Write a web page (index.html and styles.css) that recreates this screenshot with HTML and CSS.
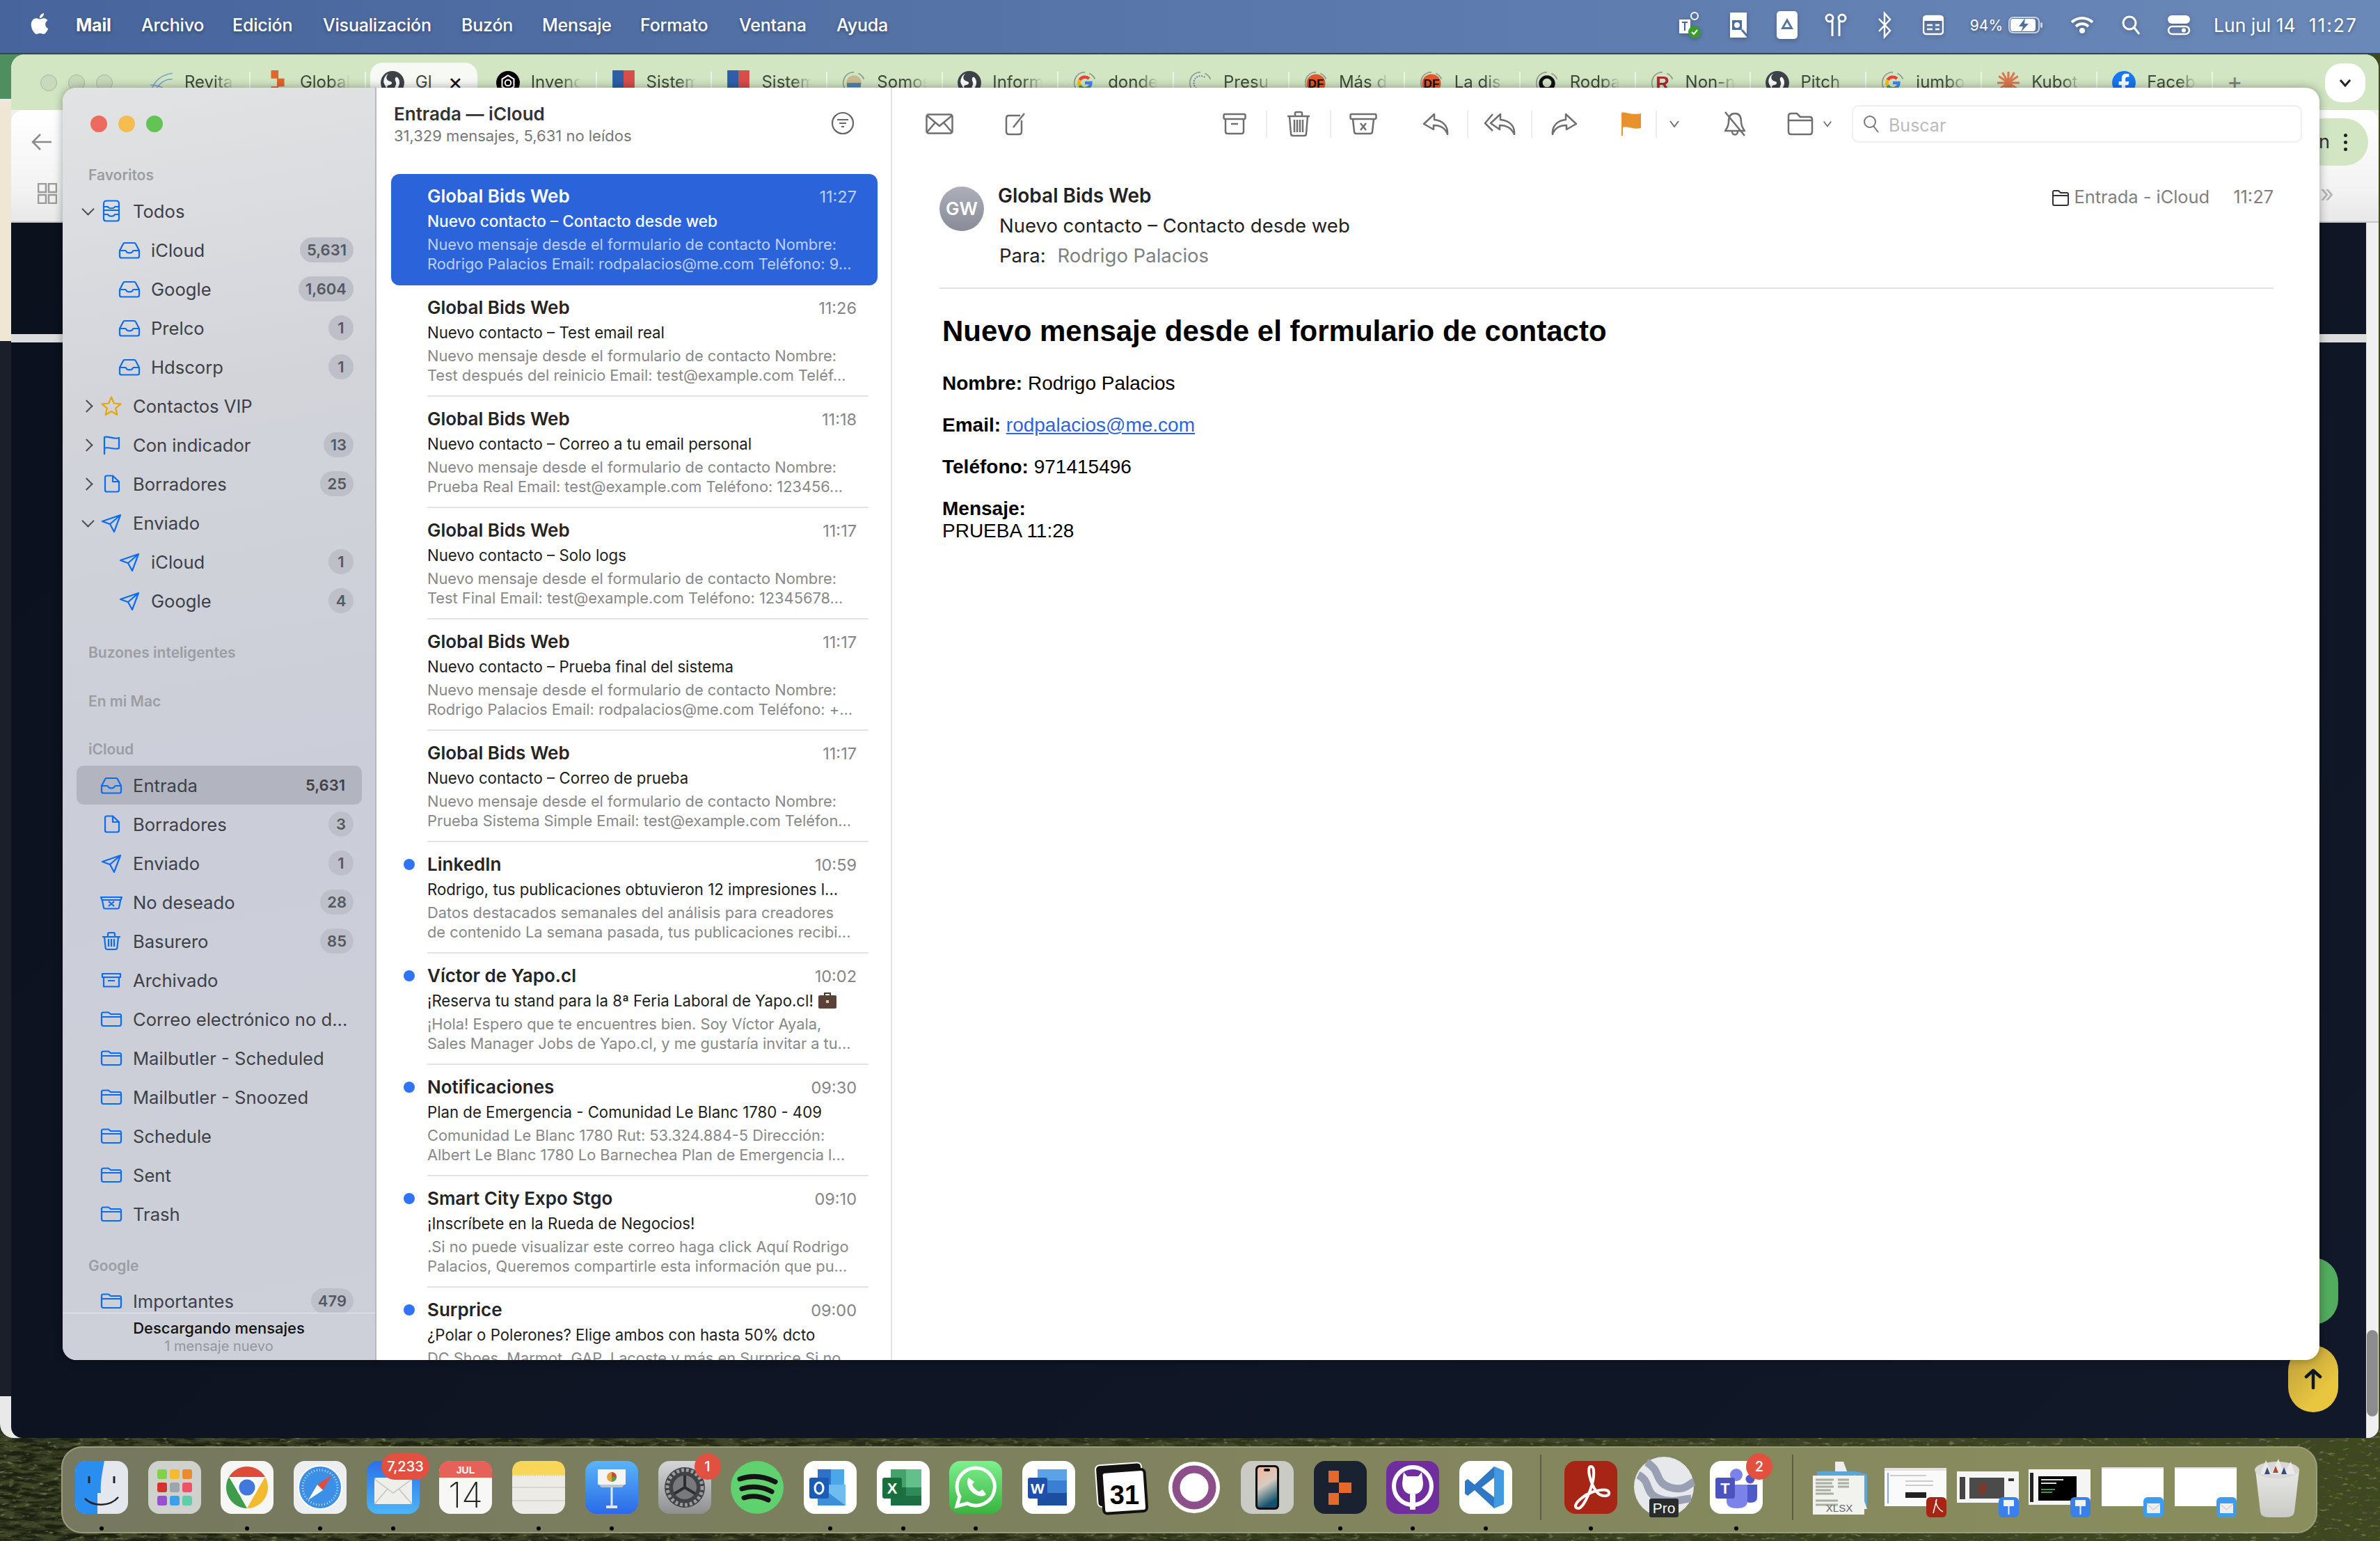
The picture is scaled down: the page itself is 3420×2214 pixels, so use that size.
FILE: index.html
```html
<!DOCTYPE html>
<html lang="es">
<head>
    <meta charset="UTF-8">
    <meta name="viewport" content="width=device-width, initial-scale=1.0">
    <title>Mail - Entrada</title>
    <link rel="stylesheet" href="styles.css">
</head>
<body>
    <!-- icon sprite -->
    <svg class="sprite" width="0" height="0">
        <defs>
            <symbol id="i-inbox" viewBox="0 0 32 32"><path d="M2 17 7 7.500Q7.600 6 9 6H23Q24.400 6 25 7.500L30 17V25Q30 27.500 27.500 27.500H4.500Q2 27.500 2 25ZM2 17H10Q11 17 11.400 18.200C12.500 21.200 19.500 21.200 20.600 18.200Q21 17 22 17H30"/></symbol>
            <symbol id="i-all" viewBox="0 0 32 32"><path d="M5 15V6Q5 1.500 9 1.500H23Q27 1.500 27 6V15M5 10H11C12 13 20 13 21 10H27M5 15V27Q5 30.500 8 30.500H24Q27 30.500 27 27V15M5 15H27M5 21H11C12 24.500 20 24.500 21 21H27"/></symbol>
            <symbol id="i-doc" viewBox="0 0 32 32"><path d="M7 7Q7 4.500 9.500 4.500H18L27 13V25Q27 27.500 24.500 27.500H9.500Q7 27.500 7 25ZM18 4.500V13H27"/></symbol>
            <symbol id="i-send" viewBox="0 0 32 32"><path d="M3 14 29 5 20 29 14 18ZM14 18 29 5"/></symbol>
            <symbol id="i-star" viewBox="0 0 32 32"><path d="M16 3.500 19.800 12.500 29.500 13.300 22.100 19.600 24.400 29 16 24 7.600 29 9.900 19.600 2.500 13.300 12.200 12.500Z"/></symbol>
            <symbol id="i-flag" viewBox="0 0 32 32"><path d="M6 30V5C12 3 20 9 27 6V21C20 24 12 18 6 21"/></symbol>
            <symbol id="i-junk" viewBox="0 0 32 32"><path d="M1 9H31L29 14 27 24Q26.700 25.500 25 25.500H7Q5.300 25.500 5 24L3 14ZM3 13H29M12 15 20 22M20 15 12 22"/></symbol>
            <symbol id="i-trash" viewBox="0 0 32 32"><path d="M3 10H29M11 10V6Q11 4 13 4H19Q21 4 21 6V10M6 10 7.500 25Q7.700 28 10 28H22Q24.300 28 24.500 25L26 10M12 13V24M16 13V24M20 13V24"/></symbol>
            <symbol id="i-archive" viewBox="0 0 32 32"><path d="M3 7H29V12H3ZM5 12V25.500H27V12M11 17H21"/></symbol>
            <symbol id="i-folder" viewBox="0 0 32 32"><path d="M2 9Q2 6.500 4.500 6.500H12L15 9H28Q30 9 30 11.500V23Q30 26 27.500 26H4.500Q2 26 2 23ZM2 13H30"/></symbol>
            <symbol id="t-ring" viewBox="0 0 40 40"><path class="ring" d="M8 32A17 17 0 0 1 20 3M27 5A17 17 0 0 1 36 14"/></symbol>
            <symbol id="t-world" viewBox="0 0 34 34"><circle cx="17" cy="17" r="16" fill="#3d4249"/><path d="M12 4C7 8 8 14 14 15 18 16 16 20 12 20 8 21 9 26 14 30 10 26 6 20 5 16 5 10 8 6 12 4ZM23 9C27 12 28 19 24 24 22 27 19 24 21 21 24 17 19 14 21 10Z" fill="#fff"/></symbol>
            <symbol id="t-g" viewBox="0 0 34 34"><g fill="none" stroke-width="6"><path d="M25 9A11.500 11.500 0 0 0 7 11.500" stroke="#ea4335"/><path d="M7 11.500A11.500 11.500 0 0 0 7 22.500" stroke="#fbbc05"/><path d="M7 22.500A11.500 11.500 0 0 0 26 24" stroke="#34a853"/><path d="M26 24Q28.500 21 28.500 17H17" stroke="#4285f4"/></g></symbol>
            <symbol id="t-df" viewBox="0 0 34 34"><circle cx="17" cy="17" r="15" fill="#e2572b"/><text class="svg-b" x="17" y="24" font-size="19" text-anchor="middle" fill="#111">DF</text></symbol>
            <symbol id="t-flag" viewBox="0 0 34 34"><rect x="2" y="0" width="16" height="34" fill="#2d5fa8"/><rect x="17" y="0" width="15" height="34" fill="#d94c4c"/></symbol>
            <symbol id="t-stairs" viewBox="0 0 34 34"><path d="M9 0H19V11H27V22H19V34H9V22H17V11H9Z" fill="#e0662a"/></symbol>
        </defs>
    </svg>

    <svg class="grass" width="3420" height="160">
        <filter id="grass-dark">
            <feTurbulence type="fractalNoise" baseFrequency="0.035 0.16" numOctaves="4" seed="7"/>
            <feColorMatrix values="0 0 0 0 0.05  0 0 0 0 0.06  0 0 0 0 0.02  3.6 0 0 0 -1.3"/>
        </filter>
        <filter id="grass-light">
            <feTurbulence type="fractalNoise" baseFrequency="0.09 0.22" numOctaves="3" seed="21"/>
            <feColorMatrix values="0 0 0 0 0.30  0 0 0 0 0.33  0 0 0 0 0.14  0 2.6 0 0 -1.6"/>
        </filter>
        <rect width="3420" height="160" filter="url(#grass-dark)"/>
        <rect width="3420" height="160" filter="url(#grass-light)"/>
    </svg>

    <header class="menubar">
        <svg class="apple" viewBox="0 0 24 24"><path d="M12.152 6.896c-.948 0-2.415-1.078-3.960-1.040-2.040.027-3.910 1.183-4.961 3.014-2.117 3.675-.546 9.103 1.519 12.090 1.013 1.454 2.208 3.090 3.792 3.039 1.520-.065 2.090-.987 3.935-.987 1.831 0 2.350.987 3.960.948 1.637-.026 2.676-1.480 3.676-2.948 1.156-1.688 1.636-3.325 1.662-3.415-.039-.013-3.182-1.221-3.220-4.857-.026-3.040 2.480-4.494 2.597-4.559-1.429-2.090-3.623-2.324-4.390-2.376-2-.156-3.675 1.090-4.610 1.090zM15.530 3.830c.843-1.012 1.400-2.427 1.245-3.830-1.207.052-2.662.805-3.532 1.818-.780.896-1.454 2.338-1.273 3.714 1.338.104 2.715-.688 3.559-1.701"/></svg>
        <nav class="menu">
            <b>Mail</b><span>Archivo</span><span>Edición</span><span>Visualización</span><span>Buzón</span><span>Mensaje</span><span>Formato</span><span>Ventana</span><span>Ayuda</span>
        </nav>
        <div class="status">
            <span class="st"><svg width="36" height="44" viewBox="0 0 36 44"><path d="M3 14H19V34H3Z" fill="#fff"/><path d="M11 18V30M7 18H15" stroke="#47659c" stroke-width="2"/><circle cx="25" cy="9" r="5" fill="none" stroke="#fff" stroke-width="2"/><circle cx="25" cy="32" r="9" fill="#3a9a2c"/><path d="M21 32l3 3 5-6" stroke="#fff" stroke-width="2" fill="none"/></svg></span>
            <span class="st"><svg width="30" height="40" viewBox="0 0 30 40"><path d="M3 2H27V38H3Z" fill="#fff"/><rect x="6" y="13" width="14" height="14" fill="#4f6fa3"/><circle cx="13" cy="20" r="4" fill="#fff"/><path d="M20 27 28 36" stroke="#4f6fa3" stroke-width="3"/></svg></span>
            <span class="st"><svg width="32" height="42" viewBox="0 0 32 42"><rect x="1" y="1" width="30" height="40" rx="5" fill="#fff"/><path d="M16 11 25 27H7ZM16 17 12 24H20Z" fill="#56749f" fill-rule="evenodd"/></svg></span>
            <span class="st"><svg width="36" height="36" viewBox="0 0 36 36" fill="none" stroke="#fff" stroke-width="3"><circle cx="9" cy="8" r="5"/><path d="M13 10V34"/><circle cx="27" cy="8" r="5"/><path d="M23 10V34"/></svg></span>
            <span class="st"><svg width="20" height="40" viewBox="0 0 20 40" fill="none" stroke="#fff" stroke-width="2.500"><path d="M2 11 18 28 10 37V3L18 12 2 29"/></svg></span>
            <span class="st"><svg width="30" height="30" viewBox="0 0 30 30"><rect x="1" y="2" width="28" height="26" rx="4" fill="none" stroke="#fff" stroke-width="2.500"/><rect x="1" y="2" width="28" height="7" fill="#fff"/><path d="M6 15H14M6 21H14M18 15H24M18 21H24" stroke="#fff" stroke-width="2.500"/></svg></span>
            <span class="st-txt pct">94%</span>
            <svg class="batt" width="50" height="24" viewBox="0 0 50 24"><rect x="1" y="1" width="43" height="22" rx="6" fill="none" stroke="#c9d3e4" stroke-width="2"/><rect x="3" y="3" width="36" height="18" rx="4" fill="#fff"/><path d="M24 2 15 14H21L18 22 29 10H23Z" fill="#4f6fa3"/><rect x="46" y="8" width="3" height="8" rx="1.500" fill="#c9d3e4"/></svg>
            <span class="st wifi"><svg width="34" height="26" viewBox="0 0 34 26" fill="none" stroke="#fff" stroke-width="4"><path d="M2 9C11 1 23 1 32 9M8 15C13 10 21 10 26 15"/><circle cx="17" cy="21" r="2" fill="#fff"/></svg></span>
            <span class="st"><svg width="28" height="30" viewBox="0 0 28 30" fill="none" stroke="#fff" stroke-width="3"><circle cx="12" cy="12" r="9"/><path d="M19 19 26 28"/></svg></span>
            <span class="st cc"><svg width="36" height="30" viewBox="0 0 36 30"><rect x="2" y="1" width="32" height="12" rx="6" fill="#fff"/><rect x="3" y="17" width="30" height="11" rx="5.500" fill="none" stroke="#fff" stroke-width="2.500"/><circle cx="25" cy="22.500" r="3" fill="#fff"/></svg></span>
            <span class="st-txt date">Lun jul 14</span>
            <span class="st-txt clock">11:27</span>
        </div>
    </header>

    <!-- window behind the browser -->
    <div class="back-win">
        <div class="back-green"></div>
        <div class="back-beige"></div>
        <div class="back-dark"></div>
    </div>

    <!-- browser -->
    <section class="browser">
        <div class="tabstrip">
            <div class="dots"><i></i><i></i><i></i></div>
            <div class="tabs">
                <div class="tab"><svg viewBox="0 0 34 34" fill="none" stroke="#7aa4c8" stroke-width="1.500"><path d="M2 30C8 12 18 6 32 4M6 32C14 16 22 12 32 12M2 20C12 20 22 24 28 32"/></svg><span>Revita</span></div>
                <div class="tab"><svg viewBox="0 0 34 34"><use href="#t-stairs"/></svg><span>Global</span></div>
                <div class="tab tab-on"><svg viewBox="0 0 34 34"><use href="#t-world"/></svg><span>Gl</span><em>×</em></div>
                <div class="tab"><svg viewBox="0 0 34 34"><circle cx="17" cy="17" r="16" fill="#000"/><path d="M17 7 25 12V22L17 27 9 22V12Z" fill="none" stroke="#fff" stroke-width="2"/><circle cx="17" cy="17" r="4" fill="none" stroke="#fff" stroke-width="2"/></svg><span>Inveno</span></div>
                <div class="tab"><svg viewBox="0 0 34 34"><use href="#t-flag"/></svg><span>Sistem</span></div>
                <div class="tab"><svg viewBox="0 0 34 34"><use href="#t-flag"/></svg><span>Sistem</span></div>
                <div class="tab"><svg viewBox="0 0 40 40"><use href="#t-ring"/><circle cx="20" cy="20" r="12" fill="#c9b98b"/><path d="M9 20H31V27H9Z" fill="#4c86b0"/></svg><span>Somos</span></div>
                <div class="tab"><svg viewBox="0 0 34 34"><use href="#t-world"/></svg><span>Inform</span></div>
                <div class="tab"><svg viewBox="0 0 40 40"><use href="#t-ring"/><use href="#t-g" x="6" y="6" width="28" height="28"/></svg><span>donde</span></div>
                <div class="tab"><svg viewBox="0 0 40 40"><use href="#t-ring"/><path d="M27 11A11 11 0 0 0 14 29" fill="none" stroke="#5b67b5" stroke-width="2" stroke-dasharray="2 2"/><path d="M14 29H26" stroke="#c44" stroke-width="2"/></svg><span>Presu</span></div>
                <div class="tab"><svg viewBox="0 0 40 40"><use href="#t-ring"/><use href="#t-df" x="3" y="4" width="34" height="34"/></svg><span>Más d</span></div>
                <div class="tab"><svg viewBox="0 0 40 40"><use href="#t-ring"/><use href="#t-df" x="3" y="4" width="34" height="34"/></svg><span>La dis</span></div>
                <div class="tab"><svg viewBox="0 0 40 40"><use href="#t-ring"/><circle cx="20" cy="21" r="13" fill="#111"/><circle cx="20" cy="20" r="7" fill="#d2e6c4"/></svg><span>Rodpa</span></div>
                <div class="tab"><svg viewBox="0 0 40 40"><use href="#t-ring"/><text class="svg-b" x="20" y="31" font-size="30" text-anchor="middle" fill="#b0262e">R</text></svg><span>Non-n</span></div>
                <div class="tab"><svg viewBox="0 0 34 34"><use href="#t-world"/></svg><span>Pitch</span></div>
                <div class="tab"><svg viewBox="0 0 40 40"><use href="#t-ring"/><use href="#t-g" x="6" y="6" width="28" height="28"/></svg><span>jumbo</span></div>
                <div class="tab"><svg viewBox="0 0 34 34" stroke="#d9774f" stroke-width="3"><path d="M17 2V32M4 8 30 26M30 8 4 26M2 17H32M9 3 25 31M25 3 9 31"/></svg><span>Kubot</span></div>
                <div class="tab"><svg viewBox="0 0 34 34"><circle cx="17" cy="17" r="16" fill="#1877f2"/><path d="M19 33V20H23L24 15H19V12Q19 9 22 9H24V5Q22 4.500 20 4.500 14 4.500 14 11V15H10V20H14V33Z" fill="#fff"/></svg><span>Faceb</span></div>
            </div>
            <span class="tab-plus">+</span>
            <div class="tab-more"><svg width="18" height="12" viewBox="0 0 18 12" fill="none" stroke="#222" stroke-width="3"><path d="M2 2 9 10 16 2"/></svg></div>
        </div>
        <div class="br-bar">
            <svg class="br-back" width="30" height="26" viewBox="0 0 30 26" fill="none" stroke="#8a8a8a" stroke-width="2.500"><path d="M13 2 2 13 13 24M2 13H29"/></svg>
            <svg class="br-grid" width="28" height="30" viewBox="0 0 28 30" fill="none" stroke="#9a9a9a" stroke-width="2.500"><rect x="1" y="1" width="11" height="12"/><rect x="16" y="1" width="11" height="12"/><rect x="1" y="17" width="11" height="12"/><rect x="16" y="17" width="11" height="12"/></svg>
            <div class="br-pill"><span>n</span><i></i></div>
            <span class="br-more">»</span>
        </div>
        <div class="br-page">
            <div class="page-dark">
                <div class="page-band"></div>
                <span class="fab fab-green"></span>
                <span class="fab fab-yellow"><svg width="26" height="30" viewBox="0 0 26 30" fill="none" stroke="#0f1626" stroke-width="4.500" stroke-linecap="round" stroke-linejoin="round"><path d="M13 28V3M3 12 13 3 23 12"/></svg></span>
            </div>
            <div class="scrolltrack"><i></i></div>
        </div>
    </section>

    <!-- mail -->
    <main class="mail">
        <aside class="side">
            <div class="lights"><i class="red"></i><i class="yel"></i><i class="grn"></i></div>
            <div class="side-list">
                <h4 class="sec sec-fav">Favoritos</h4>
                <div class="row"><span class="chev down"></span><svg class="ic"><use href="#i-all"/></svg><span class="lb">Todos</span></div>
                <div class="row sub"><span class="chev"></span><svg class="ic"><use href="#i-inbox"/></svg><span class="lb">iCloud</span><span class="bd">5,631</span></div>
                <div class="row sub"><span class="chev"></span><svg class="ic"><use href="#i-inbox"/></svg><span class="lb">Google</span><span class="bd">1,604</span></div>
                <div class="row sub"><span class="chev"></span><svg class="ic"><use href="#i-inbox"/></svg><span class="lb">Prelco</span><span class="bd">1</span></div>
                <div class="row sub"><span class="chev"></span><svg class="ic"><use href="#i-inbox"/></svg><span class="lb">Hdscorp</span><span class="bd">1</span></div>
                <div class="row"><span class="chev"></span><svg class="ic ic-star"><use href="#i-star"/></svg><span class="lb">Contactos VIP</span></div>
                <div class="row"><span class="chev"></span><svg class="ic"><use href="#i-flag"/></svg><span class="lb">Con indicador</span><span class="bd">13</span></div>
                <div class="row"><span class="chev"></span><svg class="ic"><use href="#i-doc"/></svg><span class="lb">Borradores</span><span class="bd">25</span></div>
                <div class="row"><span class="chev down"></span><svg class="ic"><use href="#i-send"/></svg><span class="lb">Enviado</span></div>
                <div class="row sub"><span class="chev"></span><svg class="ic"><use href="#i-send"/></svg><span class="lb">iCloud</span><span class="bd">1</span></div>
                <div class="row sub"><span class="chev"></span><svg class="ic"><use href="#i-send"/></svg><span class="lb">Google</span><span class="bd">4</span></div>

                <h4 class="sec sec-smart">Buzones inteligentes</h4>
                <h4 class="sec sec-mac">En mi Mac</h4>
                <h4 class="sec sec-icloud">iCloud</h4>
                <div class="row row-on"><span class="chev-none"></span><svg class="ic"><use href="#i-inbox"/></svg><span class="lb">Entrada</span><span class="bd">5,631</span></div>
                <div class="row"><span class="chev-none"></span><svg class="ic"><use href="#i-doc"/></svg><span class="lb">Borradores</span><span class="bd">3</span></div>
                <div class="row"><span class="chev-none"></span><svg class="ic"><use href="#i-send"/></svg><span class="lb">Enviado</span><span class="bd">1</span></div>
                <div class="row"><span class="chev-none"></span><svg class="ic"><use href="#i-junk"/></svg><span class="lb">No deseado</span><span class="bd">28</span></div>
                <div class="row"><span class="chev-none"></span><svg class="ic"><use href="#i-trash"/></svg><span class="lb">Basurero</span><span class="bd">85</span></div>
                <div class="row"><span class="chev-none"></span><svg class="ic"><use href="#i-archive"/></svg><span class="lb">Archivado</span></div>
                <div class="row"><span class="chev-none"></span><svg class="ic"><use href="#i-folder"/></svg><span class="lb">Correo electrónico no d...</span></div>
                <div class="row"><span class="chev-none"></span><svg class="ic"><use href="#i-folder"/></svg><span class="lb">Mailbutler - Scheduled</span></div>
                <div class="row"><span class="chev-none"></span><svg class="ic"><use href="#i-folder"/></svg><span class="lb">Mailbutler - Snoozed</span></div>
                <div class="row"><span class="chev-none"></span><svg class="ic"><use href="#i-folder"/></svg><span class="lb">Schedule</span></div>
                <div class="row"><span class="chev-none"></span><svg class="ic"><use href="#i-folder"/></svg><span class="lb">Sent</span></div>
                <div class="row"><span class="chev-none"></span><svg class="ic"><use href="#i-folder"/></svg><span class="lb">Trash</span></div>

                <h4 class="sec sec-google">Google</h4>
                <div class="row"><span class="chev-none"></span><svg class="ic"><use href="#i-folder"/></svg><span class="lb">Importantes</span><span class="bd">479</span></div>
            </div>
            <div class="side-status">
                <strong>Descargando mensajes</strong>
                <span>1 mensaje nuevo</span>
            </div>
        </aside>

        <section class="list">
            <div class="list-head">
                <div>
                    <h3>Entrada — iCloud</h3>
                    <p>31,329 mensajes, 5,631 no leídos</p>
                </div>
                <svg width="34" height="34" viewBox="0 0 34 34" fill="none" stroke="#666" stroke-width="2.200"><circle cx="17" cy="17" r="15"/><path d="M9 12H25M12 17H22M15 22H19"/></svg>
            </div>
            <div class="msgs">
                <article class="msg msg-on"><div class="msg-in">
                    <div class="msg-top"><h5>Global Bids Web</h5><time>11:27</time></div>
                    <div class="subj">Nuevo contacto – Contacto desde web</div>
                    <div class="prev">Nuevo mensaje desde el formulario de contacto Nombre:<br>Rodrigo Palacios Email: rodpalacios@me.com Teléfono: 9...</div>
                </div></article>
                <article class="msg"><div class="msg-in">
                    <div class="msg-top"><h5>Global Bids Web</h5><time>11:26</time></div>
                    <div class="subj">Nuevo contacto – Test email real</div>
                    <div class="prev">Nuevo mensaje desde el formulario de contacto Nombre:<br>Test después del reinicio Email: test@example.com Teléf...</div>
                </div></article>
                <article class="msg"><div class="msg-in">
                    <div class="msg-top"><h5>Global Bids Web</h5><time>11:18</time></div>
                    <div class="subj">Nuevo contacto – Correo a tu email personal</div>
                    <div class="prev">Nuevo mensaje desde el formulario de contacto Nombre:<br>Prueba Real Email: test@example.com Teléfono: 123456...</div>
                </div></article>
                <article class="msg"><div class="msg-in">
                    <div class="msg-top"><h5>Global Bids Web</h5><time>11:17</time></div>
                    <div class="subj">Nuevo contacto – Solo logs</div>
                    <div class="prev">Nuevo mensaje desde el formulario de contacto Nombre:<br>Test Final Email: test@example.com Teléfono: 12345678...</div>
                </div></article>
                <article class="msg"><div class="msg-in">
                    <div class="msg-top"><h5>Global Bids Web</h5><time>11:17</time></div>
                    <div class="subj">Nuevo contacto – Prueba final del sistema</div>
                    <div class="prev">Nuevo mensaje desde el formulario de contacto Nombre:<br>Rodrigo Palacios Email: rodpalacios@me.com Teléfono: +...</div>
                </div></article>
                <article class="msg"><div class="msg-in">
                    <div class="msg-top"><h5>Global Bids Web</h5><time>11:17</time></div>
                    <div class="subj">Nuevo contacto – Correo de prueba</div>
                    <div class="prev">Nuevo mensaje desde el formulario de contacto Nombre:<br>Prueba Sistema Simple Email: test@example.com Teléfon...</div>
                </div></article>
                <article class="msg unread"><div class="msg-in">
                    <div class="msg-top"><h5>LinkedIn</h5><time>10:59</time></div>
                    <div class="subj">Rodrigo, tus publicaciones obtuvieron 12 impresiones l...</div>
                    <div class="prev">Datos destacados semanales del análisis para creadores<br>de contenido La semana pasada, tus publicaciones recibi...</div>
                </div></article>
                <article class="msg unread"><div class="msg-in">
                    <div class="msg-top"><h5>Víctor de Yapo.cl</h5><time>10:02</time></div>
                    <div class="subj">¡Reserva tu stand para la 8ª Feria Laboral de Yapo.cl! <svg class="case" width="28" height="26" viewBox="0 0 28 26"><path d="M10 6V3H18V6" fill="none" stroke="#4a3a30" stroke-width="2"/><rect x="1" y="6" width="26" height="19" rx="2" fill="#5a4336"/><rect x="12" y="13" width="4" height="4" fill="#d8cbb8"/></svg></div>
                    <div class="prev">¡Hola! Espero que te encuentres bien. Soy Víctor Ayala,<br>Sales Manager Jobs de Yapo.cl, y me gustaría invitar a tu...</div>
                </div></article>
                <article class="msg unread"><div class="msg-in">
                    <div class="msg-top"><h5>Notificaciones</h5><time>09:30</time></div>
                    <div class="subj">Plan de Emergencia - Comunidad Le Blanc 1780 - 409</div>
                    <div class="prev">Comunidad Le Blanc 1780 Rut: 53.324.884-5 Dirección:<br>Albert Le Blanc 1780 Lo Barnechea Plan de Emergencia l...</div>
                </div></article>
                <article class="msg unread"><div class="msg-in">
                    <div class="msg-top"><h5>Smart City Expo Stgo</h5><time>09:10</time></div>
                    <div class="subj">¡Inscríbete en la Rueda de Negocios!</div>
                    <div class="prev">.Si no puede visualizar este correo haga click Aquí Rodrigo<br>Palacios, Queremos compartirle esta información que pu...</div>
                </div></article>
                <article class="msg unread"><div class="msg-in">
                    <div class="msg-top"><h5>Surprice</h5><time>09:00</time></div>
                    <div class="subj">¿Polar o Polerones? Elige ambos con hasta 50% dcto</div>
                    <div class="prev">DC Shoes, Marmot, GAP, Lacoste y más en Surprice Si no</div>
                </div></article>
            </div>
        </section>

        <section class="detail">
            <div class="tools">
                <span class="tb tb-60"><svg width="40" height="30" viewBox="0 0 40 30" fill="none"><rect x="1.500" y="1.500" width="37" height="27" rx="3"/><path d="M2 3 20 18 38 3M2 27 14 13M38 27 26 13"/></svg></span>
                <span class="tb tb-60 tb-compose"><svg width="32" height="34" viewBox="0 0 32 34" fill="none"><path d="M22 5H6Q2 5 2 9V28Q2 32 6 32H20Q24 32 24 28V12"/><path d="M12 22 28 2"/></svg></span>
                <span class="tb tb-92 tb-archive sep"><svg width="34" height="32" viewBox="0 0 34 32" fill="none"><rect x="1.500" y="2" width="31" height="7" rx="2"/><path d="M4 9V27Q4 30 7 30H27Q30 30 30 27V9M12 16H22"/></svg></span>
                <span class="tb tb-92 sep"><svg width="34" height="38" viewBox="0 0 34 38" fill="none"><path d="M1 8H33M12 8V4Q12 2 14 2H20Q22 2 22 4V8M4 8 6 33Q6 36 9 36H25Q28 36 28 33L30 8M11 13V31M15 13V31M19 13V31M23 13V31"/></svg></span>
                <span class="tb tb-92"><svg width="40" height="32" viewBox="0 0 40 32" fill="none"><rect x="1.500" y="2" width="37" height="7" rx="2"/><path d="M5 9 7 27Q7 30 10 30H30Q33 30 33 27L35 9M16 15 24 25M24 15 16 25"/></svg></span>
                <span class="tb tb-92 tb-reply sep"><svg width="38" height="32" viewBox="0 0 38 32" fill="none"><path d="M17 2 2 16 16 24V18C26 18 33 22 36 31 37 20 30 11 17 10Z"/></svg></span>
                <span class="tb tb-92 sep"><svg width="46" height="32" viewBox="0 0 46 32" fill="none"><path d="M13 2 2 15 13 26M24 2 10 15 23 24V18C33 18 40 22 44 31 45 20 38 11 24 10Z"/></svg></span>
                <span class="tb tb-92"><svg width="38" height="32" viewBox="0 0 38 32" fill="none"><path d="M21 2 36 16 22 24V18C12 18 5 22 2 31 1 20 8 11 21 10Z"/></svg></span>
                <span class="tb tb-72 tb-flag sep"><svg width="30" height="34" viewBox="0 0 30 34"><path d="M1 34V1C8-1 12 5 29 2V23C18 26 9 19 3 22V34Z" fill="#e8922e"/></svg></span>
                <span class="tb tb-50"><svg width="16" height="12" viewBox="0 0 16 12" fill="none" class="thin"><path d="M2 2 8 10 14 2"/></svg></span>
                <span class="tb tb-60 tb-bell"><svg width="34" height="38" viewBox="0 0 34 38" fill="none"><path d="M17 4C10 4 8 10 8 16 8 22 6 25 3 29H31C28 25 26 22 26 16 26 10 24 4 17 4ZM13 30C13 36 21 36 21 30M3 2 31 36"/></svg></span>
                <span class="tb tb-50 tb-folder"><svg width="38" height="34" viewBox="0 0 38 34" fill="none"><path d="M2 6Q2 2 6 2H14L19 7H33Q36 7 36 11V28Q36 32 33 32H6Q2 32 2 28ZM2 12H36"/></svg></span>
                <span class="tb tb-28"><svg width="14" height="12" viewBox="0 0 16 12" fill="none" class="thin"><path d="M2 2 8 10 14 2"/></svg></span>
                <div class="search">
                    <svg width="24" height="26" viewBox="0 0 24 26" fill="none" stroke="#777" stroke-width="2"><circle cx="10" cy="10" r="8"/><path d="M15 16 22 25"/></svg>
                    <span>Buscar</span>
                </div>
            </div>
            <div class="head">
                <div class="avatar">GW</div>
                <div class="head-main">
                    <div class="h-from">Global Bids Web</div>
                    <div class="h-subj">Nuevo contacto – Contacto desde web</div>
                    <div class="h-to">Para: <span>Rodrigo Palacios</span></div>
                </div>
                <div class="head-side">
                    <svg width="26" height="26" viewBox="0 0 26 26" fill="none" stroke="#333" stroke-width="2"><path d="M2 5Q2 3 4 3H10L13 6H22Q24 6 24 8V22Q24 24 22 24H4Q2 24 2 22ZM2 10H24"/></svg>
                    <span>Entrada - iCloud</span>
                    <time>11:27</time>
                </div>
            </div>
            <div class="body">
                <h2>Nuevo mensaje desde el formulario de contacto</h2>
                <p><b>Nombre:</b> Rodrigo Palacios</p>
                <p><b>Email:</b> <a href="#">rodpalacios@me.com</a></p>
                <p><b>Teléfono:</b> 971415496</p>
                <p><b>Mensaje:</b><br>PRUEBA 11:28</p>
            </div>
        </section>
    </main>

    <!-- dock -->
    <footer class="dock">
        <div class="di on"><svg viewBox="0 0 76 76"><rect width="76" height="76" rx="16" fill="#e4e8ee"/><path d="M16 0H42C38 20 36 34 37 46H32V76H16Q0 76 0 60V16Q0 0 16 0Z" fill="#2a8df0"/><path d="M20 22V32M56 22V32" stroke="#222" stroke-width="3"/><path d="M14 54C26 66 50 66 62 52" stroke="#222" stroke-width="2.500" fill="none"/></svg></div>
        <div class="di"><svg viewBox="0 0 76 76"><rect width="76" height="76" rx="16" fill="#cfd1cc"/><rect x="13" y="12" width="14" height="14" rx="3" fill="#7fd24a"/><rect x="31" y="12" width="14" height="14" rx="3" fill="#f5b932"/><rect x="49" y="12" width="14" height="14" rx="3" fill="#e88c2f"/><rect x="13" y="31" width="14" height="14" rx="3" fill="#d2332a"/><rect x="31" y="31" width="14" height="14" rx="3" fill="#9da6ac"/><rect x="49" y="31" width="14" height="14" rx="3" fill="#ee5266"/><rect x="13" y="50" width="14" height="14" rx="3" fill="#9a4fd0"/><rect x="31" y="50" width="14" height="14" rx="3" fill="#3b9ff0"/><rect x="49" y="50" width="14" height="14" rx="3" fill="#5fcdaa"/></svg></div>
        <div class="di on"><svg viewBox="0 0 76 76"><rect width="76" height="76" rx="16" fill="#f6f6f4"/><path d="M12 23A30 30 0 0 1 64 23H38Z" fill="#dd4b39"/><path d="M64 23A30 30 0 0 1 38 68L51 45Z" fill="#f2bb2f"/><path d="M38 68A30 30 0 0 1 12 23L25 45Z" fill="#3f9c4c"/><circle cx="38" cy="38" r="15" fill="#fff"/><circle cx="38" cy="38" r="11.500" fill="#4178dc"/></svg></div>
        <div class="di on"><svg viewBox="0 0 76 76"><rect width="76" height="76" rx="16" fill="#eceef0"/><circle cx="38" cy="38" r="31" fill="#3c8fe6" stroke="#fff" stroke-width="2"/><circle cx="38" cy="38" r="25" fill="none" stroke="#cde3fa" stroke-width="3" stroke-dasharray="1 3"/><path d="M55 20 34 34 42 42Z" fill="#e34b3f"/><path d="M21 56 42 42 34 34Z" fill="#fff"/></svg></div>
        <div class="di on"><svg viewBox="0 0 76 76"><defs><linearGradient id="mail-g" x1="0" y1="1" x2="0" y2="0"><stop offset="0" stop-color="#4db5f5"/><stop offset="1" stop-color="#2b70ea"/></linearGradient></defs><rect width="76" height="76" rx="16" fill="url(#mail-g)"/><rect x="11" y="24" width="54" height="38" rx="3" fill="#eeeeea"/><path d="M11 26 38 46 65 26M11 62 30 40M65 62 46 40" stroke="#c3c3bf" stroke-width="1.500" fill="none"/></svg><b class="dbadge wide">7,233</b></div>
        <div class="di"><svg viewBox="0 0 76 76"><rect width="76" height="76" rx="16" fill="#f7f7f6"/><path d="M0 24V16Q0 0 16 0H60Q76 0 76 16V24Z" fill="#e66258"/><text class="svg-b" x="38" y="18" font-size="14" fill="#fff" text-anchor="middle">JUL</text><text class="svg-t" x="38" y="67" font-size="50" fill="#222" text-anchor="middle">14</text></svg></div>
        <div class="di on"><svg viewBox="0 0 76 76"><rect width="76" height="76" rx="16" fill="#ecebe6"/><path d="M0 20V16Q0 0 16 0H60Q76 0 76 16V20Z" fill="#f8d65a"/><path d="M0 21H76" stroke="#c9c8bd" stroke-width="1" stroke-dasharray="2 1"/><path d="M0 38H76M0 57H76" stroke="#d7d6cf" stroke-width="2"/></svg></div>
        <div class="di on"><svg viewBox="0 0 76 76"><defs><linearGradient id="key-g" x1="0" y1="0" x2="0" y2="1"><stop offset="0" stop-color="#5ab4f8"/><stop offset="1" stop-color="#2a6ae8"/></linearGradient></defs><rect width="76" height="76" rx="16" fill="url(#key-g)"/><path d="M18 12H58V34H18Z" fill="#f4f4f4"/><path d="M20 34H56L53 38H23Z" fill="#b9c4d4"/><circle cx="38" cy="23" r="7" fill="#e5a23b"/><path d="M38 23V16A7 7 0 0 1 45 23Z" fill="#d2463c"/><path d="M38 23H45A7 7 0 0 1 38 30Z" fill="#4aa356"/><rect x="36.500" y="38" width="3" height="28" fill="#e2e8f0"/><rect x="30" y="64" width="16" height="4" fill="#e6e6e6"/></svg></div>
        <div class="di"><svg viewBox="0 0 76 76"><defs><linearGradient id="sys-g" x1="0" y1="0" x2="0" y2="1"><stop offset="0" stop-color="#d4d6d8"/><stop offset="1" stop-color="#8e8f90"/></linearGradient></defs><rect width="76" height="76" rx="16" fill="url(#sys-g)"/><circle cx="38" cy="38" r="29" fill="#3f4144"/><circle cx="38" cy="38" r="25" fill="none" stroke="#9b9d9f" stroke-width="5" stroke-dasharray="4 3"/><circle cx="38" cy="38" r="17" fill="#77797c"/><path d="M38 21V38L23 47M38 38 53 47" stroke="#2d2e30" stroke-width="4" fill="none"/></svg><b class="dbadge">1</b></div>
        <div class="di"><svg viewBox="0 0 76 76"><circle cx="38" cy="38" r="38" fill="#5fd16e"/><path d="M13 26C30 20 48 22 64 30M16 40C30 35 46 37 59 44M19 53C31 49 43 51 54 56" stroke="#141414" stroke-width="7" stroke-linecap="round" fill="none"/></svg></div>
        <div class="di on"><svg viewBox="0 0 76 76"><rect width="76" height="76" rx="16" fill="#fff"/><path d="M20 12H58V34H20Z" fill="#2c72c8"/><path d="M39 12H58V34H39Z" fill="#4aa8ea"/><path d="M20 34H60V64H20Z" fill="#6ebcf0"/><path d="M20 34 60 64H20Z" fill="#3f8fd8"/><rect x="8" y="24" width="28" height="30" rx="3" fill="#1a5cb8"/><ellipse cx="22" cy="39" rx="6" ry="8" fill="none" stroke="#fff" stroke-width="3"/></svg></div>
        <div class="di on"><svg viewBox="0 0 76 76"><rect width="76" height="76" rx="16" fill="#fff"/><path d="M20 12H64V38H20Z" fill="#45a26c"/><path d="M42 12H64V38H42Z" fill="#63c08d"/><path d="M20 38H64V64H20Z" fill="#1d6e42"/><path d="M42 38H64V50H42Z" fill="#2f8a58"/><rect x="8" y="24" width="28" height="30" rx="3" fill="#18703c"/><text class="svg-b" x="22" y="47" font-size="22" fill="#fff" text-anchor="middle">X</text></svg></div>
        <div class="di on"><svg viewBox="0 0 76 76"><defs><linearGradient id="wa-g" x1="0" y1="0" x2="0" y2="1"><stop offset="0" stop-color="#7df08e"/><stop offset="1" stop-color="#38b43f"/></linearGradient></defs><rect width="76" height="76" rx="16" fill="url(#wa-g)"/><path d="M38 10A27 27 0 0 0 15 51L11 65 26 61A27 27 0 1 0 38 10Z" fill="none" stroke="#fff" stroke-width="5"/><path d="M28 24C24 28 26 38 32 44 38 50 48 53 53 48L48 41 43 44C38 42 35 38 33 34L36 30Z" fill="#fff"/></svg></div>
        <div class="di"><svg viewBox="0 0 76 76"><rect width="76" height="76" rx="16" fill="#fff"/><path d="M22 12H64V28H22Z" fill="#5ba3e6"/><path d="M22 28H64V46H22Z" fill="#3b7fd2"/><path d="M22 46H64V64H22Z" fill="#1d4f9f"/><rect x="8" y="24" width="28" height="30" rx="3" fill="#1c4fae"/><text class="svg-b" x="22" y="47" font-size="21" fill="#fff" text-anchor="middle">W</text></svg></div>
        <div class="di"><svg viewBox="0 0 76 76"><rect x="2" y="4" width="66" height="60" rx="6" fill="#111" stroke="#fff" stroke-width="2" transform="rotate(-4 38 38)"/><rect x="10" y="14" width="62" height="60" rx="5" fill="#fff" stroke="#111" stroke-width="4" transform="rotate(-4 38 38)"/><text class="svg-b" x="42" y="62" font-size="38" fill="#000" text-anchor="middle">31</text></svg></div>
        <div class="di"><svg viewBox="0 0 76 76"><circle cx="38" cy="38" r="37" fill="#fff"/><circle cx="38" cy="38" r="26" fill="none" stroke="#8d4f8a" stroke-width="11"/></svg></div>
        <div class="di"><svg viewBox="0 0 76 76"><defs><linearGradient id="ph-g" x1="0" y1="0" x2="0.300" y2="1"><stop offset="0" stop-color="#f4b49a"/><stop offset="0.500" stop-color="#d7ccc0"/><stop offset="1" stop-color="#13526f"/></linearGradient></defs><rect width="76" height="76" rx="16" fill="#c9cbc4"/><rect x="21" y="6" width="34" height="64" rx="6" fill="#111"/><rect x="24" y="9" width="28" height="58" rx="4" fill="url(#ph-g)"/><rect x="33" y="11" width="9" height="4" rx="2" fill="#111"/></svg></div>
        <div class="di on"><svg viewBox="0 0 76 76"><rect width="76" height="76" rx="16" fill="#1a2130"/><path d="M21 14H36V31H54V46H36V63H21V46H36V31H21Z" fill="#e4692a"/></svg></div>
        <div class="di on"><svg viewBox="0 0 76 76"><rect width="76" height="76" rx="16" fill="#6f2d9e"/><circle cx="38" cy="36" r="27" fill="none" stroke="#fff" stroke-width="6"/><path d="M25 16 30 22H46L51 16 53 32C53 44 46 48 38 48 30 48 23 44 23 32ZM34 48H42V70H34Z" fill="#fff"/></svg></div>
        <div class="di on"><svg viewBox="0 0 76 76"><rect width="76" height="76" rx="16" fill="#fff"/><path d="M50 8 64 14V62L50 68 22 42 12 50 8 47V29L12 26 22 34Z" fill="#2f78c4"/><path d="M50 8 64 14V62L50 68Z" fill="#419ae0"/><path d="M50 24V52L32 38Z" fill="#fff"/></svg></div>
        <span class="dock-sep sep-a"></span>
        <div class="di on"><svg viewBox="0 0 76 76"><rect width="76" height="76" rx="16" fill="#a62514"/><path d="M38 8C32 8 36 30 46 44 52 52 66 52 64 45 62 38 38 42 24 54 14 62 14 68 20 68 28 68 44 32 42 14 42 10 40 8 38 8Z" fill="none" stroke="#fff" stroke-width="4"/></svg></div>
        <div class="di di-earth"><svg viewBox="0 0 87 87"><circle cx="43" cy="43" r="43" fill="#e6e8ec"/><path d="M18 8C40 20 28 36 52 44 72 50 78 40 86 36M6 26C26 36 14 52 36 60 56 68 72 60 82 60" fill="none" stroke="#9aa0b4" stroke-width="11"/><rect x="22" y="60" width="42" height="27" rx="3" fill="#2a2b2c"/><text class="svg-r" x="43" y="81" font-size="21" fill="#fff" text-anchor="middle">Pro</text></svg></div>
        <div class="di di-teams on"><svg viewBox="0 0 76 76"><rect width="76" height="76" rx="16" fill="#fff"/><circle cx="38" cy="20" r="9" fill="#7b83eb"/><circle cx="58" cy="26" r="6.500" fill="#5059c9"/><path d="M50 34H68V52Q68 60 58 60 50 60 50 52Z" fill="#5059c9"/><path d="M24 34H54V58Q54 68 39 68 24 68 24 58Z" fill="#7b83eb"/><rect x="8" y="24" width="28" height="30" rx="3" fill="#4b53bc"/><text class="svg-b" x="22" y="47" font-size="22" fill="#fff" text-anchor="middle">T</text></svg><b class="dbadge">2</b></div>
        <span class="dock-sep sep-b"></span>
        <div class="di di-stack"><svg viewBox="0 0 81 78"><path d="M32 2H44L58 40V18H32Z" fill="#eee"/><path d="M6 16H62L78 20V66H6Z" fill="#5aa6d8"/><path d="M60 20 78 70H60Z" fill="#f3f3f1"/><rect x="0" y="22" width="74" height="56" fill="#f2f3ef"/><path d="M4 28H30M4 33H28M4 38H30M4 43H26M4 48H30M36 28H52M36 33H52M36 38H52M4 58H36M4 64H36" stroke="#a8b09f" stroke-width="3"/><text class="svg-r" x="38" y="74" font-size="15" fill="#666" text-anchor="middle">XLSX</text></svg></div>
        <div class="di di-thumb th-1"><svg viewBox="0 0 89 86"><rect y="15" width="89" height="55" fill="#fafafa"/><rect y="15" width="89" height="4" fill="#e2e2e2"/><path d="M8 26H60M30 34H70M30 40H70" stroke="#ccc" stroke-width="2"/><rect x="30" y="50" width="30" height="8" fill="#222"/><path d="M5 22V66" stroke="#8aa4d8" stroke-width="2"/><rect x="60" y="57" width="29" height="29" rx="6" fill="#a62514"/><path d="M75 60C72 64 76 74 84 78M75 60 70 80" stroke="#fff" stroke-width="1.500" fill="none"/></svg></div>
        <div class="di di-thumb th-2"><svg viewBox="0 0 89 86"><rect y="20" width="89" height="45" fill="#f5f5f5"/><rect x="4" y="28" width="8" height="32" fill="#444"/><rect x="18" y="29" width="50" height="30" fill="#4b4b4b"/><path d="M34 34 44 40 40 52H30Z" fill="#7a3a2a"/><rect x="74" y="30" width="8" height="4" fill="#333"/><use href="#dock-key-mini" x="60" y="57"/></svg></div>
        <div class="di di-thumb th-3"><svg viewBox="0 0 89 86"><rect y="17" width="89" height="51" fill="#f5f5f5"/><rect x="2" y="22" width="5" height="42" fill="#222"/><rect x="14" y="27" width="55" height="35" fill="#000"/><path d="M18 32H50M18 37H40" stroke="#ddd" stroke-width="2"/><path d="M18 46H38M18 50H34" stroke="#5cc06a" stroke-width="1.500"/><use href="#dock-key-mini" x="60" y="57"/></svg></div>
        <div class="di di-thumb th-4"><svg viewBox="0 0 89 86"><rect y="15" width="89" height="55" fill="#fff"/><path d="M0 15H89" stroke="#ddd" stroke-width="2"/><use href="#dock-mail-mini" x="60" y="57"/></svg></div>
        <div class="di di-thumb th-5"><svg viewBox="0 0 89 86"><rect y="15" width="89" height="55" fill="#fff"/><path d="M0 15H89" stroke="#ddd" stroke-width="2"/><use href="#dock-mail-mini" x="60" y="57"/></svg></div>
        <div class="di di-trash"><svg viewBox="0 0 69 86"><defs><linearGradient id="tr-g" x1="0" y1="0" x2="0" y2="1"><stop offset="0" stop-color="#e8e8e6"/><stop offset="1" stop-color="#c9cac6"/></linearGradient></defs><path d="M3 18 10 78Q11 86 22 86H46Q58 86 59 78L66 18Z" fill="url(#tr-g)"/><ellipse cx="34" cy="18" rx="32" ry="12" fill="#d8d8d6"/><path d="M10 24 18 4 26 22 36 2 44 22 54 6 60 24Z" fill="#e9e9e9"/><path d="M16 24 20 14 24 24ZM40 24 44 14 48 24Z" fill="#3a4a7a"/><path d="M28 22 32 12 36 22Z" fill="#b04a2e"/></svg></div>
        <svg class="sprite" width="0" height="0">
            <defs>
                <symbol id="dock-key-mini" viewBox="0 0 29 29" width="29" height="29"><rect width="29" height="29" rx="6" fill="#3a80ec"/><rect x="7" y="4" width="15" height="9" fill="#f2f2f2"/><rect x="13.500" y="13" width="2" height="12" fill="#eef"/></symbol>
                <symbol id="dock-mail-mini" viewBox="0 0 29 29" width="29" height="29"><rect width="29" height="29" rx="6" fill="#3d9cf0"/><rect x="5" y="9" width="19" height="14" fill="#eee"/><path d="M5 10 14.500 18 24 10" stroke="#bbb" fill="none"/></symbol>
            </defs>
        </svg>
    </footer>
</body>
</html>
```
FILE: styles.css
```css
* {
    box-sizing: border-box;
}
html, body {
    margin: 0;
    width: 3420px;
    height: 2214px;
    overflow: hidden;
}
body {
    position: relative;
    font-family: Inter, "Noto Sans", sans-serif;
    background: linear-gradient(90deg, #1b2011 0%, #262c14 40%, #3f4a1c 100%);
    color: #222;
}
h2, h3, h4, h5, p {
    margin: 0;
}
.sprite {
    position: absolute;
}
.svg-b {
    font-family: "Liberation Sans", sans-serif;
    font-weight: 700;
}
.svg-r {
    font-family: "Liberation Sans", sans-serif;
}
.svg-t {
    font-family: Inter, sans-serif;
    font-weight: 200;
}
.grass {
    position: absolute;
    left: 0;
    top: 2054px;
}

/* menu bar */
.menubar {
    display: flex;
    align-items: center;
    height: 78px;
    padding: 0 32px 4px 42px;
    background: linear-gradient(90deg, #47659c, #6a88b8);
    border-bottom: 2px solid #2f4468;
    color: #fff;
    font-size: 25px;
    text-shadow: 0 2px 5px rgba(0, 0, 0, 0.35);
}
.apple {
    width: 30px;
    height: 36px;
    fill: #fff;
    margin-bottom: 4px;
}
.menu {
    display: flex;
    margin-left: 37px;
    font-weight: 500;
    letter-spacing: -0.2px;
}
.menu b {
    font-weight: 700;
    width: 94px;
}
.menu span:nth-child(2) { width: 131px; }
.menu span:nth-child(3) { width: 130px; }
.menu span:nth-child(4) { width: 199px; }
.menu span:nth-child(5) { width: 116px; }
.menu span:nth-child(6) { width: 141px; }
.menu span:nth-child(7) { width: 142px; }
.menu span:nth-child(8) { width: 140px; }
.status {
    display: flex;
    align-items: center;
    margin-left: auto;
}
.st {
    display: flex;
    justify-content: center;
    align-items: center;
    width: 70px;
}
.st svg, .batt {
    filter: drop-shadow(0 2px 3px rgba(0, 0, 0, 0.25));
}
.wifi {
    margin-left: 21px;
}
.cc {
    width: 68px;
}
.pct {
    margin-left: 18px;
    font-size: 21px;
}
.batt {
    margin-left: 8px;
}
.date {
    margin-left: 16px;
    font-size: 26.5px;
}
.clock {
    margin-left: 19px;
    font-size: 26.5px;
    letter-spacing: 2px;
}

/* window behind */
.back-win {
    position: absolute;
    left: 0;
    top: 78px;
    width: 40px;
    height: 1988px;
    display: flex;
    flex-direction: column;
    background: #e9e9e9;
    border-bottom-left-radius: 20px;
    overflow: hidden;
}
.back-green {
    height: 64px;
    background: #4f8e5f;
}
.back-beige {
    height: 344px;
    margin-top: 4px;
    background: #efe7d4;
}
.back-dark {
    height: 1516px;
    background: #1a1f2a;
}

/* browser */
.browser {
    position: absolute;
    left: 16px;
    top: 78px;
    width: 3402px;
    height: 1988px;
    display: flex;
    flex-direction: column;
    background: #f0f0f0;
    border-radius: 20px 20px 16px 16px;
    overflow: hidden;
}
.tabstrip {
    display: flex;
    height: 80px;
    padding: 22px 0 0 42px;
    background: #d2e6c4;
    border-top: 1px solid #b9c9ae;
}
.dots {
    display: flex;
    gap: 16px;
    margin-top: 6px;
}
.dots i {
    width: 24px;
    height: 24px;
    border-radius: 50%;
    background: #c9d9bc;
    border: 1px solid #a8b79d;
}
.tabs {
    display: flex;
    margin-left: 32px;
}
.tab {
    position: relative;
    display: flex;
    width: 165.9px;
    height: 58px;
    padding-left: 20px;
    gap: 15px;
    font-size: 24px;
    line-height: 34px;
    color: #3f4a3a;
    white-space: nowrap;
}
.tab::after {
    content: "";
    position: absolute;
    right: 0;
    top: 2px;
    width: 2px;
    height: 40px;
    background: #eef5e8;
}
.tab svg {
    flex: none;
    width: 36px;
    height: 36px;
    overflow: visible;
}
.tab > span {
    width: 72px;
    overflow: hidden;
    -webkit-mask-image: linear-gradient(90deg, #000 60%, transparent);
    mask-image: linear-gradient(90deg, #000 60%, transparent);
}
.tab-on::after {
    display: none;
}
.tab-on::before {
    content: "";
    position: absolute;
    left: 6px;
    right: 6px;
    top: -11px;
    bottom: 0;
    background: #f7f9f5;
    border-radius: 18px 18px 0 0;
}
.tab-on svg, .tab-on span, .tab-on em {
    position: relative;
}
.tab-on > span {
    width: 26px;
    -webkit-mask-image: none;
    mask-image: none;
}
.tab-on em {
    margin-left: 6px;
    font-style: normal;
    font-size: 32px;
    color: #111;
}
.ring {
    fill: none;
    stroke: #8e978a;
    stroke-width: 2;
}
.tab-plus {
    margin-left: 20px;
    font-size: 34px;
    line-height: 32px;
    color: #7b8573;
}
.tab-more {
    display: flex;
    align-items: center;
    justify-content: center;
    width: 58px;
    height: 56px;
    margin: -10px 0 0 118px;
    background: #fff;
    border-radius: 24px;
}
.br-bar {
    position: relative;
    height: 162px;
    background: linear-gradient(180deg, #fff, #f3f3f3 70%, #e8e8e8);
    border-bottom: 2px solid #c7c7c7;
    border-radius: 18px 18px 0 0;
}
.br-back {
    position: absolute;
    left: 29px;
    top: 33px;
}
.br-grid {
    position: absolute;
    left: 38px;
    top: 105px;
}
.br-pill {
    position: absolute;
    left: 3290px;
    top: 12px;
    width: 97px;
    height: 68px;
    padding-left: 26px;
    background: #d2e6c4;
    border-radius: 34px;
    font-size: 27px;
    line-height: 68px;
    color: #333;
}
.br-pill i {
    position: absolute;
    left: 62px;
    top: 22px;
    width: 5px;
    height: 5px;
    border-radius: 50%;
    background: #222;
    box-shadow: 0 10px 0 #222, 0 20px 0 #222;
}
.br-more {
    position: absolute;
    left: 3318px;
    top: 100px;
    font-size: 34px;
    line-height: 40px;
    color: #b4b4b4;
}
.br-page {
    flex: 1;
    display: flex;
}
.page-dark {
    position: relative;
    flex: 1;
    background: linear-gradient(135deg, #0b111d, #111829);
}
.page-band {
    height: 12px;
    margin-top: 160px;
    background: #dcdcdc;
}
.fab {
    position: absolute;
    display: flex;
    align-items: center;
    justify-content: center;
    left: 3272px;
    width: 72px;
    height: 96px;
    border-radius: 36px;
}
.fab-green {
    top: 1487px;
    background: #52ac5e;
}
.fab-yellow {
    top: 1613px;
    background: linear-gradient(135deg, #b89a3c, #e9c63f 70%);
}
.scrolltrack {
    position: relative;
    width: 18px;
    background: #f0f0f0;
    border-left: 1px solid #e2e2e2;
}
.scrolltrack i {
    position: absolute;
    left: 0;
    top: 1591px;
    width: 16px;
    height: 124px;
    background: #8c8c8c;
    border-radius: 8px;
}

/* mail window */
.mail {
    position: absolute;
    left: 90px;
    top: 126px;
    width: 3243px;
    height: 1828px;
    display: flex;
    background: #fff;
    border-radius: 20px;
    overflow: hidden;
    box-shadow: 0 0 14px rgba(0, 0, 0, 0.35);
}
.side {
    display: flex;
    flex-direction: column;
    flex: none;
    width: 451px;
    background: linear-gradient(170deg, #e2e3e4 0%, #d2d4da 25%, #cbced8 55%, #cdd0d8 100%);
    border-right: 2px solid #b5b8c1;
}
.lights {
    display: flex;
    gap: 16px;
    height: 106px;
    padding: 40px 0 0 40px;
}
.lights i {
    width: 24px;
    height: 24px;
    border-radius: 50%;
}
.red { background: #ee6a5f; }
.yel { background: #f5bd4f; }
.grn { background: #61c454; }
.side-list {
    flex: 1;
    overflow: hidden;
}
.sec {
    height: 40px;
    padding-left: 37px;
    font-size: 21px;
    font-weight: 600;
    line-height: 40px;
    color: #9b9da3;
    margin-bottom: 3px;
}
.sec-smart {
    margin-top: 27px;
    margin-bottom: 0;
}
.sec-mac {
    margin-top: 30px;
    margin-bottom: 0;
}
.sec-icloud {
    margin-top: 29px;
}
.sec-google {
    margin-top: 27px;
    margin-bottom: 2px;
}
.row {
    display: flex;
    align-items: center;
    height: 56px;
    margin: 0 19px 0 20px;
    padding: 0 12px 0 8px;
    font-size: 25.6px;
    color: #3e4046;
    border-radius: 10px;
    white-space: nowrap;
}
.row-on {
    background: #b2b5bf;
}
.chev, .chev-none {
    flex: none;
    width: 20px;
    height: 20px;
    position: relative;
}
.chev::before {
    content: "";
    position: absolute;
    left: 0;
    top: 4px;
    width: 11px;
    height: 11px;
    border-top: 2.5px solid #4d4f55;
    border-right: 2.5px solid #4d4f55;
    transform: rotate(45deg);
}
.chev.down::before {
    left: 2px;
    top: 1px;
    transform: rotate(135deg);
}
.sub .chev::before {
    display: none;
}
.ic {
    flex: none;
    width: 32px;
    height: 32px;
    margin-left: 6px;
    fill: none;
    stroke: #0a6df0;
    stroke-width: 2.2;
    stroke-linejoin: round;
}
.ic-star {
    stroke: #e2a90a;
}
.sub .ic {
    margin-left: 32px;
}
.lb {
    flex: 1;
    margin-left: 15px;
}
.bd {
    min-width: 36px;
    height: 36px;
    padding: 0 10px;
    border-radius: 18px;
    background: #bdc0c9;
    font-size: 22px;
    font-weight: 600;
    line-height: 36px;
    text-align: center;
    color: #565860;
}
.row-on .bd {
    background: none;
    padding-right: 12px;
    color: #3e4046;
}
.side-status {
    flex: none;
    height: 68px;
    display: flex;
    flex-direction: column;
    align-items: center;
    padding-top: 8px;
    border-top: 1px solid #e6e7ea;
    font-size: 22px;
    line-height: 26px;
}
.side-status strong {
    font-weight: 500;
    color: #111;
}
.side-status span {
    font-size: 20px;
    color: #94969c;
}

/* message list */
.list {
    display: flex;
    flex-direction: column;
    flex: none;
    width: 741px;
    border-right: 2px solid #e3e3e3;
    overflow: hidden;
}
.list-head {
    display: flex;
    justify-content: space-between;
    height: 124px;
    padding: 21px 52px 0 25px;
}
.list-head svg {
    margin-top: 13px;
}
.list-head h3 {
    font-size: 26px;
    font-weight: 600;
    line-height: 34px;
    color: #333;
}
.list-head p {
    font-size: 22px;
    line-height: 28px;
    color: #777;
}
.msgs {
    flex: 1;
    overflow: hidden;
}
.msg {
    position: relative;
    height: 160px;
    margin: 0 19px 0 21px;
    padding: 0 13px 0 52px;
    border-radius: 12px;
}
.msg-in {
    height: 160px;
    padding-top: 14px;
    border-bottom: 2px solid #e3e3e3;
}
.msg-top {
    display: flex;
    justify-content: space-between;
    align-items: center;
    height: 34px;
    padding-right: 17px;
}
.msg h5 {
    font-size: 26px;
    font-weight: 600;
    color: #242424;
}
.msg time {
    margin-top: 3px;
    font-size: 23.5px;
    color: #858585;
}
.subj {
    margin-top: 4px;
    font-size: 22.2px;
    line-height: 32px;
    color: #1c1c1c;
    white-space: nowrap;
}
.msg-on .subj {
    font-size: 22.6px;
    font-weight: 500;
}
.case {
    vertical-align: -4px;
}
.prev {
    margin-top: 3px;
    font-size: 21.8px;
    line-height: 28px;
    color: #888;
    white-space: nowrap;
}
.unread::before {
    content: "";
    position: absolute;
    left: 18px;
    top: 24px;
    width: 16px;
    height: 16px;
    border-radius: 50%;
    background: #2f74f5;
}
.msg-on {
    background: #2b63db;
}
.msg-on .msg-in {
    border-bottom: none;
}
.msg-on h5, .msg-on .subj {
    color: #fff;
}
.msg-on time, .msg-on .prev {
    color: #bdd0f6;
}

/* reading pane */
.detail {
    flex: 1;
    display: flex;
    flex-direction: column;
    min-width: 0;
}
.tools {
    display: flex;
    align-items: center;
    flex: none;
    height: 104px;
    padding: 0 25px 0 38px;
}
.tb {
    display: flex;
    align-items: center;
    justify-content: center;
    flex: none;
    height: 39px;
}
.tb svg {
    flex: none;
    stroke: #6f6f6f;
    stroke-width: 2.5;
    stroke-linejoin: round;
}
.tb svg.thin {
    stroke-width: 2;
}
.tb-flag svg {
    stroke: none;
}
.tb-60 { width: 60px; }
.tb-92 { width: 92px; }
.tb-72 { width: 72px; }
.tb-50 { width: 50px; }
.tb-28 { width: 28px; }
.tb-compose { margin-left: 50px; }
.tb-archive { margin-left: 239px; }
.tb-reply { margin-left: 13px; }
.tb-flag { margin-left: 15px; }
.tb-bell { margin-left: 32px; }
.tb-folder { margin-left: 39px; }
.sep {
    border-right: 2px solid #ececec;
}
.search {
    display: flex;
    align-items: center;
    flex: 1;
    height: 54px;
    margin-left: 21px;
    padding-left: 14px;
    gap: 13px;
    border: 2px solid #f0f0f0;
    border-radius: 10px;
    font-size: 25px;
    color: #bbb;
}
.search span {
    margin-top: 3px;
}
.head {
    display: flex;
    flex: none;
    height: 83px;
    box-sizing: content-box;
    padding: 38px 0 62px;
    margin: 0 66px 0 68px;
    border-bottom: 2px solid #e3e3e3;
}
.avatar {
    flex: none;
    width: 64px;
    height: 64px;
    border-radius: 50%;
    background: linear-gradient(180deg, #adafbb, #888a96);
    color: #fff;
    font-size: 26px;
    font-weight: 600;
    line-height: 64px;
    text-align: center;
}
.head-main {
    flex: 1;
    margin: -9px 0 0 20px;
    font-size: 27.5px;
    line-height: 43px;
    color: #222;
}
.h-from {
    font-size: 28px;
    font-weight: 600;
    padding-top: 1px;
}
.h-subj, .h-to {
    padding-left: 2px;
}
.h-to {
    word-spacing: 9px;
}
.h-to span {
    color: #808080;
    word-spacing: 0;
}
.head-side {
    display: flex;
    align-items: flex-start;
    margin-top: -7px;
    font-size: 25.4px;
    line-height: 43px;
    color: #808080;
    white-space: nowrap;
}
.head-side svg {
    margin: 10px 6px 0 0;
}
.head-side time {
    margin-left: 34px;
}
.body {
    padding: 37px 0 0 72px;
    font-family: "Liberation Sans", Arial, sans-serif;
    font-size: 28px;
    line-height: 32px;
    color: #000;
}
.body h2 {
    margin-bottom: 35px;
    font-size: 42px;
    line-height: 48px;
}
.body p {
    margin-bottom: 28px;
}
.body a {
    color: #2f64d9;
}

/* dock */
.dock {
    position: absolute;
    left: 88px;
    top: 2078px;
    width: 3242px;
    height: 125px;
    display: flex;
    align-items: center;
    gap: 28.7px;
    padding: 0 0 8px 18px;
    background: linear-gradient(90deg, #76785f, #8a8e5d);
    border: 2px solid #9a9d7c;
    border-radius: 30px;
}
.di {
    position: relative;
    flex: none;
    width: 76px;
    height: 76px;
}
.di svg {
    display: block;
    width: 100%;
    height: 100%;
    overflow: visible;
}
.di.on::after {
    content: "";
    position: absolute;
    left: 35px;
    top: 94px;
    width: 6px;
    height: 6px;
    border-radius: 50%;
    background: #000;
}
.dbadge {
    position: absolute;
    right: -14px;
    top: -11px;
    min-width: 38px;
    height: 38px;
    border-radius: 19px;
    padding: 0 8px;
    background: #e2503f;
    color: #fff;
    font-size: 20px;
    font-weight: 500;
    line-height: 38px;
    text-align: center;
}
.dock-sep {
    flex: none;
    width: 2px;
    height: 94px;
    background: #5b5d47;
}
.sep-a {
    margin: 0 5px 0 11px;
}
.sep-b {
    margin-left: 13px;
}
.di-earth {
    width: 87px;
    height: 87px;
    margin-left: -5px;
}
.di-teams {
    margin-left: -7px;
}
.di-stack {
    width: 81px;
    height: 78px;
}
.di-thumb {
    width: 89px;
    height: 86px;
}
.th-1 { margin-left: -7px; }
.th-2, .th-3 { margin-left: -14px; }
.th-4, .th-5 { margin-left: -13px; }
.di-trash {
    width: 69px;
    height: 86px;
    margin-left: -4px;
}
```
